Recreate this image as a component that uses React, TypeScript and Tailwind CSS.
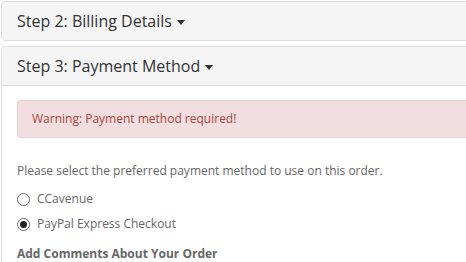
import React from 'react';

const Caret: React.FC = () => (
  <span className="ml-[5px] inline-block h-0 w-0 border-x-[4px] border-t-[5px] border-x-transparent border-t-[#333] align-middle" />
);

const PanelHeading: React.FC<{ title: string }> = ({ title }) => (
  <div className="rounded-t-[4px] bg-[#f5f5f5] px-[15px] py-[10px]">
    <h4 className="text-[16px] leading-[18px] text-[#333]">
      {title}
      <Caret />
    </h4>
  </div>
);

const RadioOption: React.FC<{ label: string; checked?: boolean }> = ({ label, checked }) => (
  <label className="flex h-[20px] items-center gap-[7px]">
    <span className="flex h-[13px] w-[13px] items-center justify-center rounded-full border border-[#666] bg-white">
      {checked && <span className="h-[7px] w-[7px] rounded-full bg-[#222]" />}
    </span>
    <span>{label}</span>
  </label>
);

const App: React.FC = () => {
  return (
    <div
      className="h-[262px] w-[466px] overflow-hidden bg-white pl-[1px] pt-[1px] text-[12px] leading-[20px] text-[#666]"
      style={{ fontFamily: '"Open Sans", sans-serif' }}
    >
      <div className="w-[520px]">
        <div className="rounded-[4px] border border-[#ddd]">
          <PanelHeading title="Step 2: Billing Details" />
        </div>

        <div className="mt-[5px] rounded-[4px] border border-[#ddd]">
          <div className="border-b border-[#ddd]">
            <PanelHeading title="Step 3: Payment Method" />
          </div>
          <div className="px-[15px] pt-[14px] pb-[15px]">
            <div className="rounded-[4px] border border-[#ebccd1] bg-[#f2dede] px-[14px] py-[8px] text-[#a94442]">
              Warning: Payment method required!
            </div>
            <p className="mt-[23px] mb-[8px]">Please select the preferred payment method to use on this order.</p>
            <div className="flex flex-col gap-[5px]">
              <RadioOption label="CCavenue" />
              <RadioOption label="PayPal Express Checkout" checked />
            </div>
            <p className="mt-[10px]">
              <strong className="font-bold">Add Comments About Your Order</strong>
            </p>
          </div>
        </div>
      </div>
    </div>
  );
};

export default App;
